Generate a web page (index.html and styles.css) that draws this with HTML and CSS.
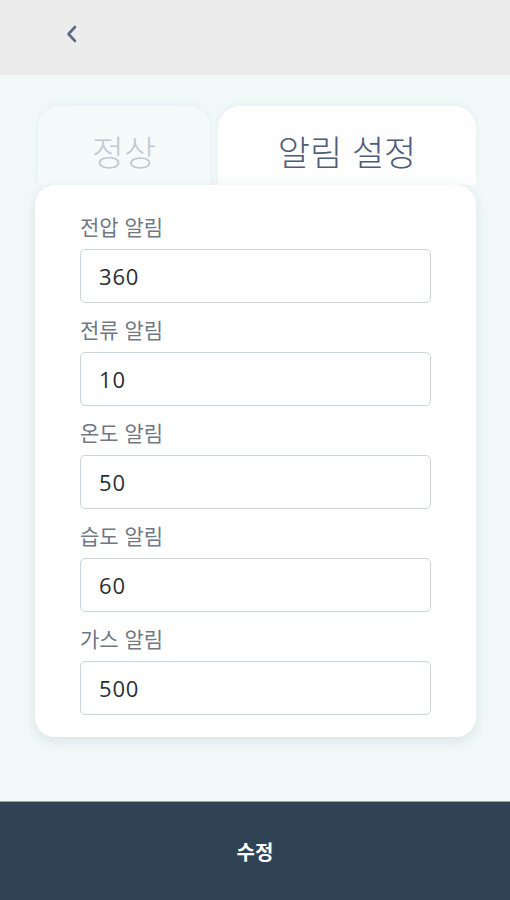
FILE: index.html
```html
<!DOCTYPE html>
<html lang="ko">
<head>
<meta charset="utf-8">
<link rel="stylesheet" href="styles.css">
</head>
<body>
<div class="app">
  <header class="topbar">
    <button class="back" aria-label="뒤로">
      <svg width="16" height="20" viewBox="0 0 16 20"><path d="M11 3 L4.5 10 L11 17" fill="none" stroke="#5b6b82" stroke-width="2.6" stroke-linecap="round" stroke-linejoin="round"/></svg>
    </button>
  </header>
  <main class="content">
    <div class="tabs">
      <div class="tab">정상</div>
      <div class="tab active">알림 설정</div>
    </div>
    <section class="card">
      <div class="field"><label>전압 알림</label><div class="input">360</div></div>
      <div class="field"><label>전류 알림</label><div class="input">10</div></div>
      <div class="field"><label>온도 알림</label><div class="input">50</div></div>
      <div class="field"><label>습도 알림</label><div class="input">60</div></div>
      <div class="field"><label>가스 알림</label><div class="input">500</div></div>
    </section>
  </main>
  <button class="submit">수정</button>
</div>
</body>
</html>
```

FILE: styles.css
```css
* { box-sizing: border-box; }
html, body { margin: 0; padding: 0; }
body {
  font-family: "Noto Sans", "Noto Sans CJK KR", sans-serif;
  background: #f3f9f9;
}
.app {
  width: 510px;
  height: 900px;
  display: flex;
  flex-direction: column;
}
.topbar {
  height: 75px;
  background: #ececec;
  display: flex;
  align-items: center;
  padding-left: 62px;
  flex-shrink: 0;
}
.back {
  background: none;
  border: 0;
  padding: 0;
  width: 20px;
  height: 22px;
  display: flex;
  align-items: center;
  justify-content: center;
  margin-top: -7px;
}
.content {
  flex: 1;
  padding: 31px 34px 0 35px;
}
.tabs {
  display: flex;
  gap: 8px;
  padding-left: 3px;
  height: 79px;
}
.tab {
  width: 172px;
  border-radius: 22px 22px 0 0;
  background: #f5fbfb;
  box-shadow: 0 -2px 8px rgba(200, 215, 220, 0.25);
  display: flex;
  align-items: center;
  justify-content: center;
  font-family: "Noto Sans CJK KR", sans-serif;
  font-weight: 300;
  font-size: 35px;
  color: #c2c9d2;
  padding-top: 10px;
}
.tab.active {
  width: 258px;
  background: #fefefe;
  color: #4d5c77;
  font-size: 35px;
}
.card {
  background: #fff;
  border-radius: 20px;
  box-shadow: 0 4px 14px rgba(150, 170, 180, 0.28);
  padding: 29px 45px 22px 45px;
  display: flex;
  flex-direction: column;
  gap: 14px;
  position: relative;
}
.field {
  display: flex;
  flex-direction: column;
  gap: 11px;
}
.field label {
  font-family: "Noto Sans CJK KR", sans-serif;
  font-size: 21px;
  line-height: 24px;
  color: #6f7883;
}
.input {
  height: 54px;
  border: 1px solid #cfd4d9;
  border-radius: 5px;
  padding: 0 18px;
  display: flex;
  align-items: center;
  font-family: "Open Sans", sans-serif;
  font-size: 22px;
  letter-spacing: 0.8px;
  color: #2b2f33;
}
.submit {
  height: 99px;
  flex-shrink: 0;
  border: 0;
  background: #304354;
  color: #fff;
  font-family: "Noto Sans CJK KR", sans-serif;
  font-weight: 700;
  font-size: 20px;
  width: 100%;
  border-top: 1px solid #9aa4ab;
}
```
